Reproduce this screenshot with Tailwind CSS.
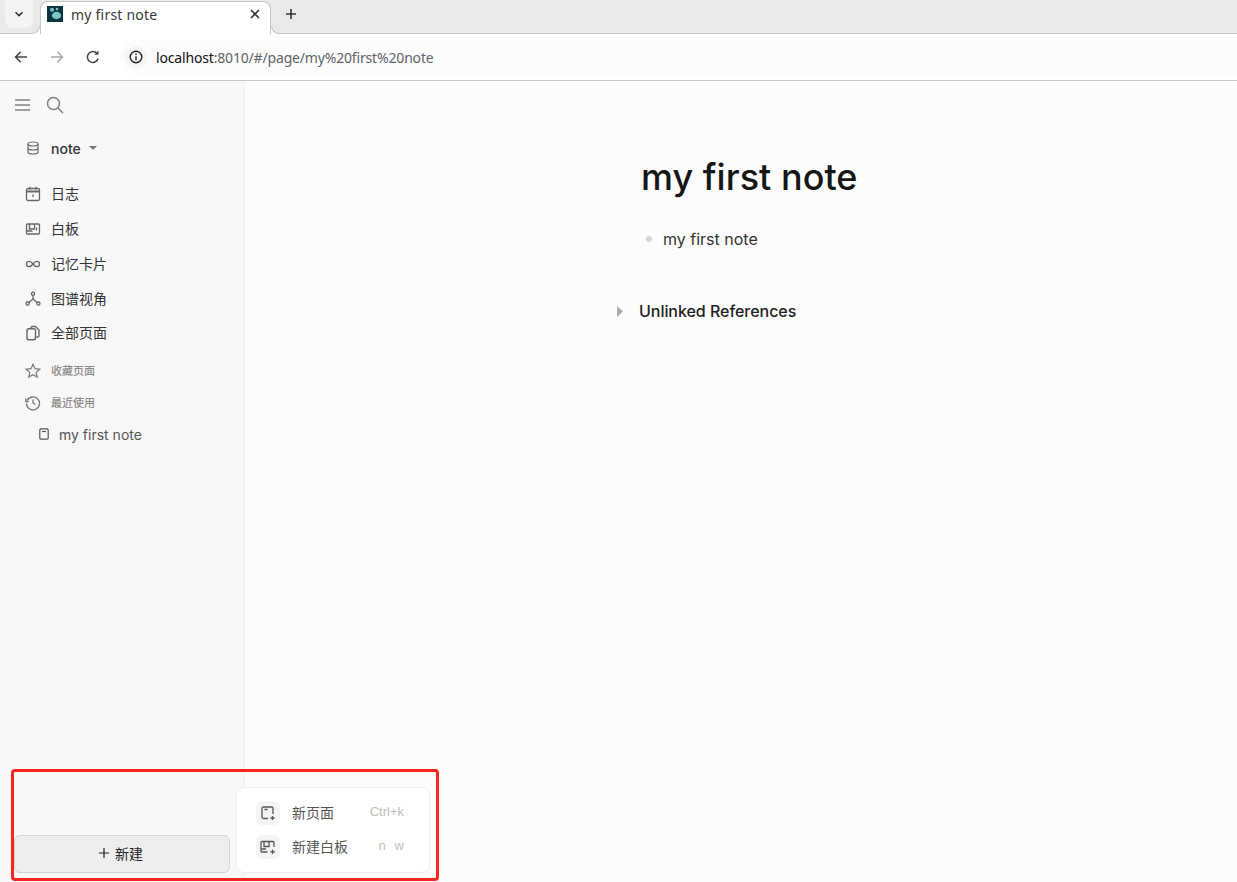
<!doctype html>
<html lang="zh">
<head>
<meta charset="utf-8">
<title>my first note</title>
<script src="https://cdn.jsdelivr.net/npm/@tailwindcss/browser@4"></script>
</head>
<body class="m-0 overflow-hidden bg-white">
<div class="relative flex h-[882px] w-[1237px] flex-col overflow-hidden font-['Inter','Noto_Sans_CJK_SC',sans-serif]">

  <!-- tab strip -->
  <div class="flex h-[34px] shrink-0 items-start border-b border-[#c6c6c6] bg-[#e9e9e9] font-['Noto_Sans',sans-serif]">
    <div class="ml-[5px] flex h-[28px] w-[28px] items-center justify-center rounded-b-lg bg-[#f4f4f4]">
      <svg class="h-3 w-3 text-[#333]" viewBox="0 0 12 12" fill="none" stroke="currentColor" stroke-width="1.6"><path d="M2.5 4.2 6 7.6l3.5-3.4"/></svg>
    </div>
    <div class="relative z-10 ml-[7px] mt-[1px] flex h-[33px] w-[231px] items-center rounded-t-lg border border-b-0 border-[#c6c6c6] bg-white pb-[8px] pl-[6px] pr-[10px]">
      <span class="absolute bottom-0 left-[-9px] h-[8px] w-[8px] bg-white"><span class="block h-[8px] w-[8px] rounded-br-lg border-r border-b border-[#c6c6c6] bg-[#e9e9e9]"></span></span>
      <span class="absolute bottom-0 right-[-9px] h-[8px] w-[8px] bg-white"><span class="block h-[8px] w-[8px] rounded-bl-lg border-l border-b border-[#c6c6c6] bg-[#e9e9e9]"></span></span>
      <svg class="h-4 w-4 shrink-0" viewBox="0 0 16 16"><rect width="16" height="16" fill="#0a3440"/><circle cx="5" cy="3.7" r="2" fill="#7cc4c0"/><circle cx="10" cy="3" r="1.3" fill="#7cc4c0"/><ellipse cx="9.5" cy="9.5" rx="4.6" ry="3.7" fill="#7cc4c0"/></svg>
      <span class="ml-2 text-[14px] tracking-[0.22px] text-[#3a3a3a]">my first note</span>
      <svg class="ml-auto h-[10px] w-[10px] text-[#333]" viewBox="0 0 10 10" stroke="currentColor" stroke-width="1.6"><path d="M1 1l8 8M9 1 1 9"/></svg>
    </div>
    <svg class="ml-[14px] mt-[8px] h-3 w-3 text-[#333]" viewBox="0 0 12 12" stroke="currentColor" stroke-width="1.6"><path d="M6 1v10M1 6h10"/></svg>
  </div>

  <!-- address bar -->
  <div class="flex h-[47px] shrink-0 items-center border-b border-[#c6c6c6] bg-white font-['Noto_Sans',sans-serif]">
    <svg class="ml-[14px] h-[14px] w-[14px] text-[#444]" viewBox="0 0 14 14" fill="none" stroke="currentColor" stroke-width="1.5"><path d="M13 7H1.500M6.700 1.700 1.500 7l5.200 5.300"/></svg>
    <svg class="ml-[22px] h-[14px] w-[14px] text-[#a8a8a8]" viewBox="0 0 14 14" fill="none" stroke="currentColor" stroke-width="1.5"><path d="M1 7h11.500M7.300 1.700 12.500 7l-5.200 5.300"/></svg>
    <svg class="ml-[21px] h-[16px] w-[16px] text-[#444]" viewBox="0 0 16 16" fill="none" stroke="currentColor" stroke-width="1.5"><path d="M13.200 9.500A5.500 5.500 0 1 1 12 4.300"/><path d="M13.500 1.500v4.200H9.300z" fill="currentColor" stroke="none"/></svg>
    <div class="ml-[19px] flex h-[34px] flex-1 items-center rounded-l-full bg-[#fcfcfc] pl-[5px]">
      <div class="flex h-[22px] w-[22px] items-center justify-center rounded-full bg-[#f5f5f5]">
        <svg class="h-[14px] w-[14px] text-[#222]" viewBox="0 0 14 14" fill="none" stroke="currentColor" stroke-width="1.400"><circle cx="7" cy="7" r="5.800"/><path d="M7 6.200v4M7 3.500v1.500"/></svg>
      </div>
      <span class="ml-[9px] text-[14px] tracking-[-0.17px] text-[#111]">localhost<span class="text-[#5f6368]">:8010/#/page/my%20first%20note</span></span>
    </div>
  </div>

  <!-- app -->
  <div class="flex min-h-0 flex-1">
    <aside class="flex w-[245px] shrink-0 flex-col border-r border-[#f0f0f0] bg-[#f8f8f8] pb-[9px] pl-[14px] pr-[14px]">
      <div class="flex h-[48px] items-center gap-[16px] pl-[1px]">
        <svg class="h-[16px] w-[15px] text-[#808080]" viewBox="0 0 15 16" stroke="currentColor" stroke-width="1.500"><path d="M0 3h15M0 8h15M0 13h15"/></svg>
        <svg class="h-[18px] w-[18px] text-[#808080]" viewBox="0 0 18 18" fill="none" stroke="currentColor" stroke-width="1.500"><circle cx="7.500" cy="7.500" r="6"/><path d="M12 12l5 5"/></svg>
      </div>
      <div class="mt-[7px] flex h-[24px] items-center pl-[12px]">
        <svg class="h-[14px] w-[14px] text-[#666]" viewBox="0 0 14 14" fill="none" stroke="currentColor" stroke-width="1.200"><ellipse cx="7" cy="3" rx="5" ry="2"/><path d="M2 3v8c0 1.100 2.200 2 5 2s5-.9 5-2V3M2 7c0 1.100 2.200 2 5 2s5-.9 5-2"/></svg>
        <span class="ml-[11px] text-[14px] font-[450] text-[#333]">note</span>
        <svg class="ml-[8px] h-[6px] w-[8px] text-[#777]" viewBox="0 0 8 6"><path d="M0 1h8L4 5z" fill="currentColor"/></svg>
      </div>
      <nav class="mt-[16px] flex flex-col text-[14px] text-[#333]">
        <div class="flex h-[35px] items-center pl-[11px]">
          <svg class="h-[16px] w-[16px] text-[#666]" viewBox="0 0 16 16" fill="none" stroke="currentColor" stroke-width="1.300"><rect x="1.500" y="2.500" width="13" height="12" rx="1.500"/><path d="M1.500 5.500h13" stroke-width="2"/><path d="M5 .8v3M11 .8v3M8 8.500v2.500"/></svg>
          <span class="ml-[10px]">日志</span>
        </div>
        <div class="flex h-[35px] items-center pl-[11px]">
          <svg class="h-[16px] w-[16px] text-[#666]" viewBox="0 0 16 16" fill="none" stroke="currentColor" stroke-width="1.300"><rect x="1.500" y="3" width="13" height="10" rx="1"/><path d="M4.500 3v5h5V3M1.500 10h6M11.500 6.500v3"/></svg>
          <span class="ml-[10px]">白板</span>
        </div>
        <div class="flex h-[35px] items-center pl-[11px]">
          <svg class="h-[16px] w-[16px] text-[#666]" viewBox="0 0 16 16" fill="none" stroke="currentColor" stroke-width="1.300"><path d="M8 8c-1.200-1.600-2.300-2.700-3.800-2.700a2.700 2.700 0 0 0 0 5.400C5.700 10.700 6.800 9.600 8 8c1.200-1.600 2.300-2.700 3.800-2.700a2.700 2.700 0 0 1 0 5.400C10.300 10.700 9.200 9.600 8 8z"/></svg>
          <span class="ml-[10px]">记忆卡片</span>
        </div>
        <div class="flex h-[35px] items-center pl-[11px]">
          <svg class="h-[16px] w-[16px] text-[#666]" viewBox="0 0 16 16" fill="none" stroke="currentColor" stroke-width="1.300"><circle cx="8" cy="2.800" r="1.600"/><circle cx="2.600" cy="12.600" r="1.600"/><circle cx="13.400" cy="12.600" r="1.600"/><path d="M8 4.400V8l-4.200 3.500M8 8l4.200 3.500"/></svg>
          <span class="ml-[10px]">图谱视角</span>
        </div>
        <div class="flex h-[33px] items-center pl-[11px]">
          <svg class="h-[16px] w-[16px] text-[#666]" viewBox="0 0 16 16" fill="none" stroke="currentColor" stroke-width="1.400"><path d="M6 3.500V2.800c0-.7.500-1.300 1.200-1.300h3.300l3.500 3.500v5.700c0 .7-.5 1.300-1.200 1.300h-1.300"/><rect x="2" y="3.800" width="8.500" height="11" rx="1.800"/></svg>
          <span class="ml-[10px]">全部页面</span>
        </div>
      </nav>
      <div class="mt-[6px] flex h-[32px] items-center pl-[11px] text-[11px] font-medium text-[#8a8a8a]">
        <svg class="h-[16px] w-[16px] text-[#777]" viewBox="0 0 16 16" fill="none" stroke="currentColor" stroke-width="1.200"><path d="m8 1.300 2 4.400 4.800.5-3.600 3.200 1 4.700L8 11.700l-4.200 2.400 1-4.700L1.200 6.200 6 5.700z"/></svg>
        <span class="ml-[10px]">收藏页面</span>
      </div>
      <div class="flex h-[32px] items-center pl-[11px] text-[11px] font-medium text-[#8a8a8a]">
        <svg class="h-[16px] w-[16px] text-[#777]" viewBox="0 0 16 16" fill="none" stroke="currentColor" stroke-width="1.300"><path d="M2.200 5.500A6.500 6.500 0 1 1 1.500 8.500"/><path d="M.8 3.500v3h3M8 4.500V8l2.500 1.500"/></svg>
        <span class="ml-[10px]">最近使用</span>
      </div>
      <div class="flex h-[30px] items-center pl-[25px] text-[14px] text-[#555]">
        <svg class="h-[12px] w-[10px] text-[#555]" viewBox="0 0 10 12" fill="none" stroke="currentColor" stroke-width="1.200"><rect x=".8" y=".8" width="8.400" height="10.400" rx="1.200"/><path d="M3 3.500h4"/></svg>
        <span class="ml-[10px]">my first note</span>
      </div>
      <button class="mt-auto flex h-[38px] w-[216px] items-center justify-center gap-[6px] rounded-md border border-[#d4d4d4] bg-[#ededed] pb-[2px] pr-[2px] text-[14px] text-[#222]">
        <svg class="h-[10px] w-[10px] text-[#222]" viewBox="0 0 10 10" stroke="currentColor" stroke-width="1.200"><path d="M5 0v10M0 5h10"/></svg>
        <span>新建</span>
      </button>
    </aside>
    <main class="flex flex-1 flex-col bg-[#fcfcfc] pl-[372px] pt-[70px]">
      <h1 class="m-0 pl-[24px] text-[36px] leading-[52px] font-[450] tracking-[0.03px] text-[#161616]">my first note</h1>
      <div class="mt-[24px] flex h-[24px] items-center pl-[29px] text-[16px] text-[#333]">
        <span class="h-[6px] w-[6px] rounded-full bg-[#d4d4d4]"></span>
        <span class="ml-[11px]">my first note</span>
      </div>
      <div class="mt-[48px] flex h-[24px] items-center text-[16px] font-[450] tracking-[-0.04px] text-[#222]">
        <svg class="h-[11px] w-[6px] text-[#aaa]" viewBox="0 0 6 11"><path d="M0 0l6 5.500L0 11z" fill="currentColor"/></svg>
        <span class="ml-[16px]">Unlinked References</span>
      </div>
    </main>
  </div>

  <!-- popover menu -->
  <div class="absolute left-[236px] top-[787px] flex h-[86px] w-[194px] flex-col justify-center gap-[10px] rounded-lg border border-[#eeeeee] bg-white pl-[19px] pr-[25px] text-[14px] text-[#555]">
    <div class="flex h-[24px] items-center">
      <span class="flex h-[24px] w-[24px] items-center justify-center rounded-md bg-[#f4f4f4]">
        <svg class="h-[16px] w-[16px] text-[#555]" viewBox="0 0 16 16" fill="none" stroke="currentColor" stroke-width="1.300"><path d="M8 13.500H3.500a1.500 1.500 0 0 1-1.500-1.500V3.500A1.500 1.500 0 0 1 3.500 2h8A1.500 1.500 0 0 1 13 3.500V9M4.500 4.500h3M12.500 11v4M10.300 13h4.400"/></svg>
      </span>
      <span class="ml-[12px] -mt-[2px]">新页面</span>
      <span class="ml-auto -mt-[3px] font-['Liberation_Sans',sans-serif] text-[13px] text-[#bdbdbd]">Ctrl+k</span>
    </div>
    <div class="flex h-[24px] items-center">
      <span class="flex h-[24px] w-[24px] items-center justify-center rounded-md bg-[#f4f4f4]">
        <svg class="h-[16px] w-[16px] text-[#555]" viewBox="0 0 16 16" fill="none" stroke="currentColor" stroke-width="1.300"><path d="M7.500 13H1.500a1 1 0 0 1-.5-1V3.500a1 1 0 0 1 1-1h11a1 1 0 0 1 1 1V8M4 2.500V7.500h5v-5M1 10h5M12.500 10.500v4.500M10.300 12.800h4.700"/></svg>
      </span>
      <span class="ml-[12px] -mt-[2px]">新建白板</span>
      <span class="ml-auto -mt-[3px] flex gap-[9px] font-['Liberation_Sans',sans-serif] text-[13px] text-[#bdbdbd]"><span>n</span><span>w</span></span>
    </div>
  </div>

  <!-- red annotation -->
  <div class="pointer-events-none absolute left-[11px] top-[769px] h-[112px] w-[428px] rounded-[4px] border-[3px] border-[#f8261c]"></div>
</div>
</body>
</html>
